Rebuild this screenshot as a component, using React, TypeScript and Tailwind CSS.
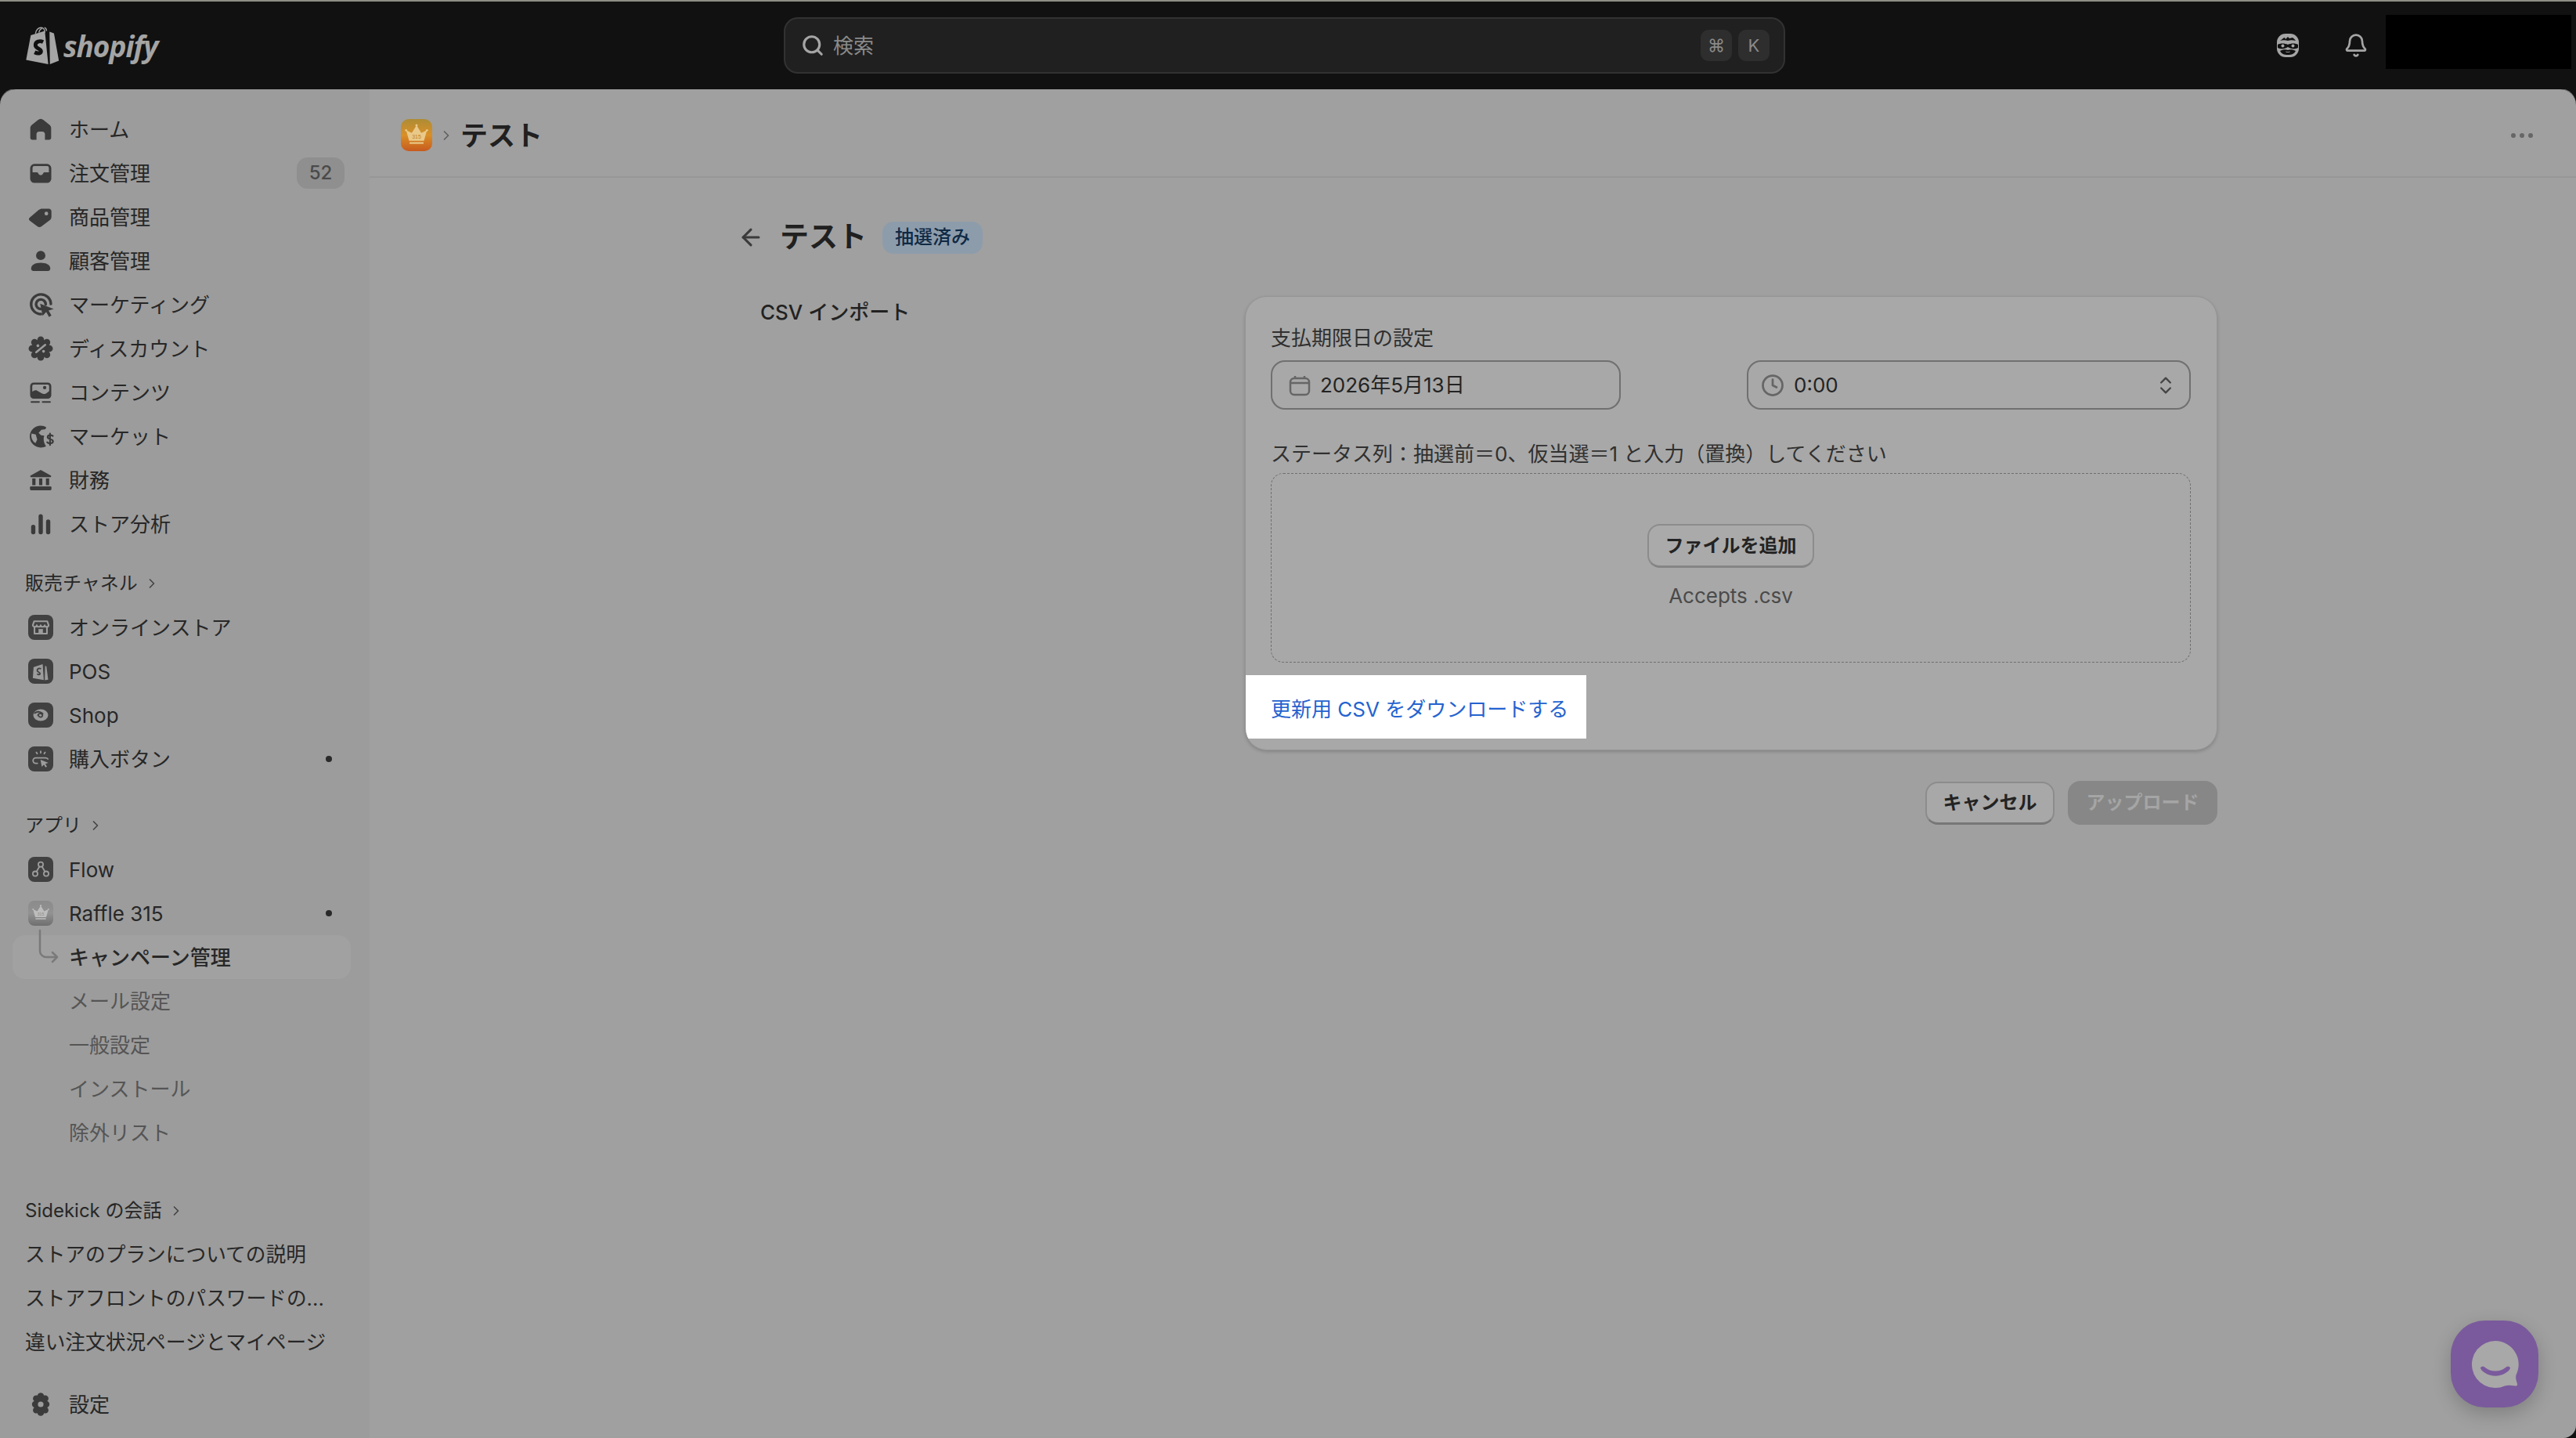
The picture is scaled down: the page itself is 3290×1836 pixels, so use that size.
import React from "react";
import { ArrowLeft, Bell, ChevronRight, ChevronsUpDown, Clock, Search } from "lucide-react";

const BG = "#9c9c9c";

function G({ children, className = "" }: { children: React.ReactNode; className?: string }) {
  return (
    <svg viewBox="0 0 20 20" className={`w-9 h-9 shrink-0 ${className}`} fill="#3b3b3b">
      {children}
    </svg>
  );
}

const HomeI = () => (
  <G>
    <path d="M2.600 9.200c0-.9.4-1.700 1.100-2.300l4.300-3.400a3.100 3.100 0 0 1 4 0l4.300 3.400c.7.6 1.100 1.400 1.100 2.300v6.900c0 .8-.7 1.400-1.400 1.400H13v-3.900a2 2 0 0 0-2-2H9a2 2 0 0 0-2 2v3.900H4c-.8 0-1.400-.6-1.400-1.400z" />
  </G>
);
const OrdersI = () => (
  <G>
    <path
      fillRule="evenodd"
      d="M5.500 3.500h9a3 3 0 0 1 3 3v7.500a3 3 0 0 1-3 3h-9a3 3 0 0 1-3-3V6.500a3 3 0 0 1 3-3zM5.500 5A1.300 1.300 0 0 0 4.200 6.300v3.200h3a1 1 0 0 1 1 .7 1.900 1.900 0 0 0 3.600 0 1 1 0 0 1 1-.7h3V6.300A1.300 1.300 0 0 0 14.500 5z"
    />
  </G>
);
const TagI = () => (
  <G>
    <path
      fillRule="evenodd"
      d="M2.400 10.300 8.600 5c.7-.6 1.500-.9 2.400-.9h4.800c1 0 1.800.8 1.800 1.800v3.900c0 .9-.4 1.800-1.100 2.400l-6.100 4.600c-.8.600-1.900.6-2.600 0l-5.400-4c-1-.7-1-1.900 0-2.500zM14 6.300a1.300 1.300 0 1 0 0 2.600 1.300 1.300 0 0 0 0-2.600z"
    />
  </G>
);
const PersonI = () => (
  <G>
    <circle cx="10" cy="6.200" r="3.300" />
    <path d="M3.200 15.500c0-2.600 2.800-4.100 6.800-4.100s6.800 1.500 6.800 4.100c0 1-.8 1.700-1.700 1.700H4.900c-.9 0-1.700-.7-1.700-1.700z" />
  </G>
);
const MarketingI = () => (
  <G>
    <path
      d="M17.200 9.500a7 7 0 1 0-7 7.200M13.500 9.800a3.400 3.400 0 1 0-3.500 3.300"
      fill="none"
      stroke="#3b3b3b"
      strokeWidth="1.900"
      strokeLinecap="round"
    />
    <path d="M9.600 9.300 19.200 13l-3.600 1.200 2 3.500-1.700 1-2-3.500-2.500 2.700z" />
  </G>
);
const DiscountI = () => (
  <G>
    <circle cx="10" cy="10" r="6.400" />
    {[0, 45, 90, 135, 180, 225, 270, 315].map((a) => (
      <circle
        key={a}
        cx={10 + 6.200 * Math.cos((a * Math.PI) / 180)}
        cy={10 + 6.200 * Math.sin((a * Math.PI) / 180)}
        r="2.400"
      />
    ))}
    <path d="M6.800 12.600 13.200 7.400" stroke={BG} strokeWidth="1.500" strokeLinecap="round" />
    <circle cx="8" cy="8" r="1" fill={BG} />
    <circle cx="12" cy="12" r="1" fill={BG} />
  </G>
);
const ContentI = () => (
  <G>
    <path
      fillRule="evenodd"
      d="M5 3h10a2.500 2.500 0 0 1 2.500 2.500V12a2.500 2.500 0 0 1-2.500 2.500H5A2.500 2.500 0 0 1 2.500 12V5.500A2.500 2.500 0 0 1 5 3zM5 4.500a1 1 0 0 0-1 1v4c1.200-1 2.300-1.400 3.400-.8l3.400 2c1.500.9 2.800.5 5.200-1.700V5.500a1 1 0 0 0-1-1z"
    />
    <circle cx="12.800" cy="6.600" r="1.200" />
    <rect x="2.800" y="16.200" width="6.600" height="1.200" rx=".6" />
    <rect x="10.800" y="16.200" width="6.400" height="1.200" rx=".6" />
  </G>
);
const MarketsI = () => (
  <G>
    <path
      fillRule="evenodd"
      d="M10 2.500c1.500 0 2.900.4 4 1.200l-.7 1.300-2.800.4-2 2.200 1.800 1.700 2.200.3c-.6 1.500-.5 3.300 0 5 .3 1 .8 1.800 1.300 2.500-1.100.6-2.400.9-3.800.9a7.700 7.700 0 0 1 0-15.500zM6.500 8.800 3.500 8a6 6 0 0 0 2.800 6.800l1.200-2.500z"
    />
    <path
      d="M18.600 9.800c-.5-.8-3.700-1-3.700.8 0 1.900 3.800 1 3.800 3 0 1.800-3.300 1.700-4.100.6M16.600 8.100v8.100"
      fill="none"
      stroke="#3b3b3b"
      strokeWidth="1.200"
      strokeLinecap="round"
    />
  </G>
);
const BankI = () => (
  <G>
    <path d="M10 2.800 17 6.600c.6.3.6 1.300-.2 1.300H3.200c-.8 0-.8-1-.2-1.300z" />
    <rect x="4" y="8.800" width="2.300" height="4.800" />
    <rect x="8.850" y="8.800" width="2.300" height="4.800" />
    <rect x="13.700" y="8.800" width="2.300" height="4.800" />
    <rect x="2.400" y="14.400" width="15.200" height="2.800" rx=".8" />
  </G>
);
const ChartI = () => (
  <G>
    <rect x="3.200" y="10.500" width="3" height="6.800" rx="1.500" />
    <rect x="8.500" y="3" width="3" height="14.300" rx="1.500" />
    <rect x="13.800" y="6.800" width="3" height="10.500" rx="1.500" />
  </G>
);
const GearI = () => (
  <G>
    <path
      fillRule="evenodd"
      d="M10 1.800c1.200 0 2.200.9 2.300 2 1-.5 2.300-.2 2.900.9.600 1 .3 2.300-.6 3 1 .5 1.600 1.300 1.600 2.300s-.6 1.800-1.600 2.300c.9.700 1.200 2 .6 3-.6 1.100-1.900 1.400-2.900.9-.1 1.100-1.100 2-2.300 2s-2.200-.9-2.300-2c-1 .5-2.300.2-2.900-.9-.6-1-.3-2.300.6-3-1-.5-1.600-1.300-1.600-2.300s.6-1.800 1.600-2.300c-.9-.7-1.200-2-.6-3 .6-1.100 1.900-1.400 2.900-.9.100-1.100 1.100-2 2.300-2zM10 8a2 2 0 1 0 0 4 2 2 0 0 0 0-4z"
    />
  </G>
);

function AppTile({ children, light = false }: { children: React.ReactNode; light?: boolean }) {
  return (
    <span
      className={`w-8 h-8 rounded-[8px] shrink-0 flex items-center justify-center ${
        light ? "bg-gradient-to-b from-[#8b8b8b] via-[#929292] to-[#6f6f6f]" : "bg-[#414141]"
      }`}
    >
      {children}
    </span>
  );
}

const tileStroke = { fill: "none", stroke: BG, strokeWidth: 1.5, strokeLinecap: "round" as const, strokeLinejoin: "round" as const };

const StoreA = () => (
  <AppTile>
    <svg viewBox="0 0 20 20" className="w-7 h-7">
      <g {...tileStroke}>
        <path d="M4 4.500h12l1.200 3.500c0 1-1 1.500-1.800 1.500S13.600 9 13.600 8c0 1-.9 1.500-1.800 1.500S10 9 10 8c0 1-.9 1.500-1.800 1.500S6.400 9 6.400 8c0 1-.9 1.500-1.800 1.500S2.800 9 2.800 8z" />
        <path d="M4.300 9.500v6.200h11.400V9.500" />
      </g>
      <rect x="8" y="11.500" width="4" height="4.200" fill={BG} />
    </svg>
  </AppTile>
);
const PosA = () => (
  <AppTile>
    <svg viewBox="0 0 20 20" className="w-7 h-7">
      <path d="M3.500 6.200 11.800 3.500l1 14.500-10-1.700z" fill={BG} />
      <path d="M14 5.200l1.200.4 1.600 12-3.100.6z" fill={BG} />
      <path d="M10.300 7.800c-1.700-.9-3.500 0-3.500 1.400 0 1.700 2.600 1.700 2.600 3 0 1-1.300 1.100-2.700.3" fill="none" stroke="#414141" strokeWidth="1.300" />
    </svg>
  </AppTile>
);
const ShopA = () => (
  <AppTile>
    <svg viewBox="0 0 20 20" className="w-7 h-7">
      <ellipse cx="10" cy="10" rx="6.800" ry="5.300" fill={BG} />
      <path d="M4.500 8.200c2.500-2 6-1.400 7.400.6M7.500 10.300c0-1.300 1.500-2 2.800-1.600 1.300.4 1.700 1.800.9 2.600-1 1-3 .5-3.200-.8" fill="none" stroke="#414141" strokeWidth="1.300" strokeLinecap="round" />
    </svg>
  </AppTile>
);
const BuyA = () => (
  <AppTile>
    <svg viewBox="0 0 20 20" className="w-7 h-7">
      <g {...tileStroke} strokeWidth={1.300}>
        <path d="M7 14H5.500a2.500 2.500 0 0 1 0-5h9a2.500 2.500 0 0 1 2 1" />
        <path d="M10 3v1.500M6 4l.8 1.200M14 4l-.8 1.200" />
      </g>
      <path d="M9.800 10.800 17 13.500l-2.800 1 1.500 2.500-1.300.7-1.500-2.500-1.900 2z" fill={BG} />
    </svg>
  </AppTile>
);
const FlowA = () => (
  <AppTile>
    <svg viewBox="0 0 20 20" className="w-7 h-7">
      <g {...tileStroke} strokeWidth={1.300}>
        <circle cx="10" cy="5.500" r="2.200" />
        <circle cx="5" cy="14" r="2.200" />
        <circle cx="15" cy="14" r="2.200" />
        <path d="M8.800 7.500 6.200 12M11.200 7.500 13.800 12" />
      </g>
    </svg>
  </AppTile>
);

function Crown({ body, text, size }: { body: string; text: string; size: string }) {
  return (
    <svg viewBox="0 0 20 20" className={size}>
      <path d="M3 6.500 6.800 8.300 10 3.200 13.200 8.300 17 6.500 15 13.500H5z" fill={body} />
      <circle cx="10" cy="3.200" r=".8" fill={body} />
      <circle cx="3" cy="6.500" r=".7" fill={body} />
      <circle cx="17" cy="6.500" r=".7" fill={body} />
      <rect x="5.300" y="14.500" width="9.400" height="1.100" fill={body} />
      <text x="10" y="12" textAnchor="middle" fontSize="3.600" fontFamily="'Liberation Sans',sans-serif" fill={text}>
        315
      </text>
    </svg>
  );
}

function Row({
  icon,
  label,
  right,
  active,
  sub,
}: {
  icon?: React.ReactNode;
  label: string;
  right?: React.ReactNode;
  active?: boolean;
  sub?: boolean;
}) {
  return (
    <div
      className={`relative h-14 ml-4 mr-6 rounded-[16px] flex items-center pr-2 ${active ? "bg-[#a1a1a1] font-medium" : ""} ${
        sub ? "text-[#555555]" : "text-[#272727]"
      }`}
    >
      <span className="w-[72px] shrink-0 flex justify-center">{icon}</span>
      <span className="flex-1 whitespace-nowrap">{label}</span>
      {right}
    </div>
  );
}

function SectionHead({ label, className = "" }: { label: string; className?: string }) {
  return (
    <div className={`h-14 pl-8 flex items-center gap-[8px] text-[24px] text-[#272727] ${className}`}>
      <span className="whitespace-nowrap">{label}</span>
      <ChevronRight className="w-5 h-5 text-[#444444]" strokeWidth={2} />
    </div>
  );
}

const Dot = () => <span className="w-2 h-2 rounded-full bg-[#2a2a2a] mr-[16px]" />;

function Sidebar() {
  return (
    <aside className="w-[472px] shrink-0 bg-[#9c9c9c] pt-[23px] pb-[15px] flex flex-col text-[26px]">
      <Row icon={<HomeI />} label="ホーム" />
      <Row
        icon={<OrdersI />}
        label="注文管理"
        right={
          <span className="w-[61px] h-10 rounded-[14px] bg-[#8f8f8f] text-[#4a4a4a] text-[24px] font-medium flex items-center justify-center">
            52
          </span>
        }
      />
      <Row icon={<TagI />} label="商品管理" />
      <Row icon={<PersonI />} label="顧客管理" />
      <Row icon={<MarketingI />} label="マーケティング" />
      <Row icon={<DiscountI />} label="ディスカウント" />
      <Row icon={<ContentI />} label="コンテンツ" />
      <Row icon={<MarketsI />} label="マーケット" />
      <Row icon={<BankI />} label="財務" />
      <Row icon={<ChartI />} label="ストア分析" />

      <SectionHead label="販売チャネル" className="mt-5" />
      <Row icon={<StoreA />} label="オンラインストア" />
      <Row icon={<PosA />} label="POS" />
      <Row icon={<ShopA />} label="Shop" />
      <Row icon={<BuyA />} label="購入ボタン" right={<Dot />} />

      <SectionHead label="アプリ" className="mt-[29px]" />
      <Row icon={<FlowA />} label="Flow" />
      <Row
        icon={
          <AppTile light>
            <Crown body="#bdbdbd" text="#8b8b8b" size="w-7 h-7" />
          </AppTile>
        }
        label="Raffle 315"
        right={<Dot />}
      />
      <Row
        active
        icon={
          <svg viewBox="0 0 40 50" className="absolute left-[23px] top-[-10px] w-[40px] h-[50px]" fill="none">
            <path
              d="M12 4v26a8 8 0 0 0 8 8h14M28 32l6 6-6 6"
              stroke="#7a7a7a"
              strokeWidth="2.500"
              strokeLinecap="round"
              strokeLinejoin="round"
            />
          </svg>
        }
        label="キャンペーン管理"
      />
      <Row sub label="メール設定" />
      <Row sub label="一般設定" />
      <Row sub label="インストール" />
      <Row sub label="除外リスト" />

      <SectionHead label="Sidekick の会話" className="mt-[44px]" />
      <div className="h-14 pl-8 flex items-center whitespace-nowrap text-[25.7px] text-[#272727]">ストアのプランについての説明</div>
      <div className="h-14 pl-8 flex items-center whitespace-nowrap text-[25.7px] text-[#272727]">ストアフロントのパスワードの...</div>
      <div className="h-14 pl-8 flex items-center whitespace-nowrap text-[25.7px] text-[#272727]">違い注文状況ページとマイページ</div>

      <div className="mt-auto">
        <Row icon={<GearI />} label="設定" />
      </div>
    </aside>
  );
}

function TopBar() {
  return (
    <header className="h-[112px] shrink-0 bg-[#111111] flex items-center relative">
      <div className="w-[1001px] shrink-0 pl-8 flex items-center gap-[5px]">
        <svg viewBox="0 0 40 46" className="w-[44px] h-[50px]">
          <path d="M1 40 6.500 11 23 6l4 39z" fill="#a5a5a5" />
          <path d="M28.500 6.800 33 8.500c.4 0 .7.3.8.7L39.500 41 29 45z" fill="#a5a5a5" />
          <path d="M12 9c.6-4 3.500-7 6.500-7s4.500 3 4.500 6M16 8c.5-2.500 2-4.500 4-5M25 6c0-2-1-3.500-2.500-4" fill="none" stroke="#a5a5a5" strokeWidth="1.300" />
          <path d="M21 19c-4-2-9-.5-9 3.500 0 4.500 6.500 4 6.500 7.500 0 2.500-3.500 3-7.500 1" fill="none" stroke="#111111" strokeWidth="4.500" />
        </svg>
        <span className="text-[#a5a5a5] text-[37px] font-bold italic leading-none tracking-[-1px] font-['Open_Sans',sans-serif]">shopify</span>
      </div>
      <div className="w-[1279px] h-[72px] shrink-0 rounded-[18px] bg-[#202020] border-2 border-[#323232] flex items-center pl-[20px] pr-[18px] text-[#8a8a8a] text-[26px]">
        <Search className="w-[30px] h-[30px] text-[#a5a5a5] mr-[11px]" strokeWidth={2.500} />
        <span className="flex-1">検索</span>
        <span className="w-10 h-10 rounded-[10px] bg-[#2e2e2e] flex items-center justify-center text-[22px] mr-2">⌘</span>
        <span className="w-10 h-10 rounded-[10px] bg-[#2e2e2e] flex items-center justify-center text-[22px]">K</span>
      </div>
      <div className="flex-1 flex items-center justify-end pr-[6px] gap-[56px]">
        <svg viewBox="0 0 30 32" className="w-[30px] h-[32px]">
          <rect x="1" y="1" width="28" height="30" rx="11" fill="#a5a5a5" />
          <path d="M5 10c2-1 4-4 6-4l1 2 3-3 2 2 4-1c2 1 3 3 4 4-4-1-7-1-10 0-3-1-7-1-10 0z" fill="#111111" />
          <path d="M2 15c3-2 9-2 13 0 4-2 10-2 13 0v4c-3 2-9 2-13-1-4 3-10 3-13 1z" fill="#111111" />
          <circle cx="8.500" cy="16.500" r="2" fill="#a5a5a5" />
          <circle cx="21.500" cy="16.500" r="2" fill="#a5a5a5" />
          <path d="M5 23c4-2 7-2.500 10-1 3-1.500 6-1 10 1-2 4-5 5-10 5s-8-1-10-5z" fill="#111111" />
          <path d="M12 23.500c2 1 4 1 6 0-.5 2-5.500 2-6 0z" fill="#a5a5a5" />
        </svg>
        <div className="flex items-center gap-[22px]">
          <Bell className="w-8 h-8 text-[#a5a5a5]" strokeWidth={2} />
          <div className="w-[237px] h-[69px] bg-black -mt-[10px]" />
        </div>
      </div>
    </header>
  );
}

function Field({ children, className = "" }: { children: React.ReactNode; className?: string }) {
  return (
    <div className={`h-[63px] rounded-[18px] border-2 border-[#707070] flex items-center text-[#232323] ${className}`}>
      {children}
    </div>
  );
}

function Card() {
  return (
    <section className="w-[1242px] h-[580px] rounded-[28px] bg-[#a8a8a8] border border-[#959595] shadow-[0_2px_4px_rgba(0,0,0,0.18)] pt-[35px] pl-[32px] pr-[33px] text-[26px] overflow-hidden">
      <div className="h-9 leading-9 mb-[10px] text-[#303030]">支払期限日の設定</div>
      <div className="flex">
        <Field className="w-[447px] pl-[21px]">
          <svg viewBox="0 0 28 28" className="w-7 h-7 mr-[12px]" fill="none" stroke="#666666" strokeWidth="2.500">
            <rect x="2" y="5" width="24" height="21" rx="5" />
            <path d="M2 11h24M8 2v4M20 2v4" />
          </svg>
          2026年5月13日
        </Field>
        <Field className="w-[567px] ml-[161px] pl-[16px] pr-[16px]">
          <Clock className="w-[30px] h-[30px] text-[#666666] mr-[12px]" strokeWidth={2.200} />
          <span className="flex-1">0:00</span>
          <ChevronsUpDown className="w-[28px] h-[32px] text-[#444444]" strokeWidth={2} />
        </Field>
      </div>
      <div className="h-9 leading-9 mt-[39px] mb-[6px] text-[#303030] whitespace-nowrap">
        ステータス列：抽選前＝0、仮当選＝1 と入力（置換）してください
      </div>
      <div className="h-[242px] rounded-[16px] border border-dashed border-[#6f6f6f] flex flex-col items-center pt-[64px]">
        <button className="w-[213px] h-14 rounded-[16px] bg-[#aaaaaa] border-2 border-[#8c8c8c] border-b-[3px] border-b-[#858585] font-semibold text-[24px] text-[#232323] whitespace-nowrap">
          ファイルを追加
        </button>
        <div className="mt-[18px] h-9 leading-9 text-[#4a4a4a]">Accepts .csv</div>
      </div>
      <div className="mt-[16px] -ml-[32px] w-[435px] h-[81px] bg-white pl-[32px] pt-[5px] flex items-center text-[#2463cf] whitespace-nowrap">
        更新用 CSV をダウンロードする
      </div>
    </section>
  );
}

function Main() {
  return (
    <main className="flex-1 bg-[#a0a0a0] flex flex-col min-w-0">
      <div className="h-[113px] shrink-0 border-b-2 border-[#979797] flex items-center pl-[40px] pr-[55px] pt-[6px]">
        <span className="w-10 h-[41px] rounded-[10px] bg-gradient-to-b from-[#ad8c35] via-[#d98f26] to-[#c65a1e] flex items-center justify-center">
          <Crown body="#e9c98a" text="#c07c22" size="w-[38px] h-[38px]" />
        </span>
        <ChevronRight className="w-5 h-7 text-[#5f5f5f] mx-2" strokeWidth={2} />
        <span className="flex-1 text-[35px] font-semibold text-[#202020] pt-[2px]">テスト</span>
        <span className="flex gap-[5px]">
          <i className="w-[6px] h-[6px] rounded-full bg-[#666666]" />
          <i className="w-[6px] h-[6px] rounded-full bg-[#666666]" />
          <i className="w-[6px] h-[6px] rounded-full bg-[#666666]" />
        </span>
      </div>
      <div className="pl-[474px] pt-[55px] w-[2360px]">
        <div className="h-[42px] flex items-center">
          <ArrowLeft className="w-[34px] h-[34px] text-[#3b3b3b] -ml-[4px] mr-[20px]" strokeWidth={2.200} />
          <span className="text-[37px] font-semibold text-[#202020]">テスト</span>
          <span className="ml-[20px] w-[128px] h-[41px] rounded-[14px] bg-[#8d9cab] text-[#0f2a45] text-[24px] font-medium flex items-center justify-center">
            抽選済み
          </span>
        </div>
        <div className="mt-[54px] flex">
          <div className="w-[644px] shrink-0 pl-[25px] pt-[3px] text-[26px] font-medium text-[#222222] leading-9">CSV インポート</div>
          <div className="flex flex-col">
            <Card />
            <div className="mt-[39px] flex justify-end items-center gap-[17px] text-[24px]">
              <button className="w-[165px] h-[55px] rounded-[16px] bg-[#a8a8a8] border-2 border-[#8c8c8c] border-b-[3px] border-b-[#777777] font-semibold text-[#232323]">
                キャンセル
              </button>
              <button className="w-[191px] h-14 rounded-[16px] bg-[#878787] text-[#a5a5a5] font-semibold">アップロード</button>
            </div>
          </div>
        </div>
      </div>
    </main>
  );
}

export default function App() {
  return (
    <div className="w-[3290px] h-[1836px] relative overflow-hidden bg-[#111111] border-t-2 border-[#8e8e85] flex flex-col font-['Inter','Noto_Sans_CJK_JP',sans-serif]">
      <TopBar />
      <div className="flex-1 flex rounded-t-[20px] rounded-br-[16px] overflow-hidden min-h-0 shadow-[0_-1px_0_#6a6a6a]">
        <Sidebar />
        <Main />
      </div>
      <div className="absolute left-[3130px] top-[1684px] w-[112px] h-[111px] rounded-[44px] bg-[#7a5a9c] shadow-[0_8px_24px_rgba(0,0,0,0.2)] flex items-center justify-center">
        <svg viewBox="0 0 64 64" className="w-16 h-16 ml-[2px]">
          <path d="M32 2a30 30 0 1 0 12 57.500c4-1.500 8-.5 14 0 1.500 0 2.500-1 2-2.500-1-4-2.500-7-1.500-11.500A30 30 0 0 0 32 2z" fill="#a8a8a8" />
          <path d="M13 36c2-2 4-2 6 0 7 6 19 6 26 0 2-2 4-2 6 0 0 2-2 5-6 7-8 5-18 5-26 0-4-2-6-5-6-7z" fill="#7a5a9c" />
        </svg>
      </div>
    </div>
  );
}
